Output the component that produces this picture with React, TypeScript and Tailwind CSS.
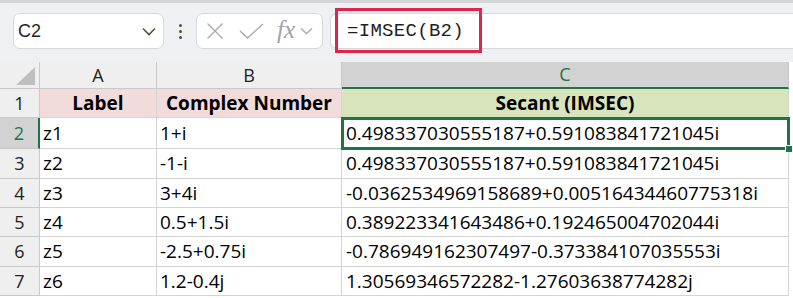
import React from 'react'

type Row = [string, string, string]

const rows: Row[] = [
    ['z1', '1+i', '0.498337030555187+0.591083841721045i'],
    ['z2', '-1-i', '0.498337030555187+0.591083841721045i'],
    ['z3', '3+4i', '-0.0362534969158689+0.00516434460775318i'],
    ['z4', '0.5+1.5i', '0.389223341643486+0.192465004702044i'],
    ['z5', '-2.5+0.75i', '-0.786949162307497-0.373384107035553i'],
    ['z6', '1.2-0.4j', '1.30569346572282-1.27603638774282j'],
]

const Toolbar = () => (
    <div className="h-[62px] bg-[#eef0f3] border-t-[3px] border-[#d3d5d8] flex items-start pt-[10px]">
        {/* name box */}
        <div className="ml-[13px] w-[151px] h-[36px] bg-white border border-[#d6d8db] rounded-[7px] flex items-center justify-between pl-[4px] pr-[7px]">
            <span className="font-['Liberation_Sans',sans-serif] text-[18px] text-[#1f1f1f]">C2</span>
            <svg width="14" height="9" viewBox="0 0 14 9" fill="none">
                <path d="M1 1.5 L7 7.5 L13 1.5" stroke="#5c4b3b" strokeWidth="1.6" />
            </svg>
        </div>
        {/* dots */}
        <div className="w-[32px] h-[36px] flex flex-col items-center justify-center gap-[3px]">
            <span className="w-[3px] h-[3px] rounded-full bg-[#5c4b3b]" />
            <span className="w-[3px] h-[3px] rounded-full bg-[#5c4b3b]" />
            <span className="w-[3px] h-[3px] rounded-full bg-[#5c4b3b]" />
        </div>
        {/* function box */}
        <div className="w-[127px] h-[36px] bg-white border border-[#d6d8db] rounded-[7px] flex items-center pl-[9px]">
            <svg width="18" height="18" viewBox="0 0 18 18" fill="none">
                <path d="M1.5 1.5 L16.5 16.5 M16.5 1.5 L1.5 16.5" stroke="#a9a9a9" strokeWidth="1.4" />
            </svg>
            <svg className="ml-[15px]" width="25" height="16" viewBox="0 0 25 16" fill="none">
                <path d="M1 8 L8.5 15 L24 1" stroke="#a9a9a9" strokeWidth="1.4" />
            </svg>
            <span className="ml-[13px] font-['Liberation_Serif',serif] italic text-[25px] leading-none text-[#a3a3a3] -mt-[3px]">fx</span>
            <svg className="ml-[5px]" width="13" height="8" viewBox="0 0 13 8" fill="none">
                <path d="M1 1.5 L6.5 6.5 L12 1.5" stroke="#a9a9a9" strokeWidth="1.3" />
            </svg>
        </div>
        {/* formula bar */}
        <div className="relative ml-[7px] flex-1 h-[36px] bg-white border-y border-l border-[#d6d8db] rounded-l-[7px] flex items-center pl-[16px]">
            <span className="font-['Liberation_Mono',monospace] text-[19px] text-[#1f1f1f] tracking-[0.3px]">=IMSEC(B2)</span>
            <div className="absolute left-[4px] top-[-6px] w-[147px] h-[45px] border-[3px] border-[#df2450]" />
        </div>
    </div>
)

const Sheet = () => (
    <div className="relative grid grid-cols-[40px_117px_185px_447px] grid-rows-[27px_29px_31px_30px_29px_29px_30px_29px] font-['Open_Sans',sans-serif] text-[19px] text-black">
        {/* header row */}
        <div className="bg-[#efefef] border-r border-b border-[#c9c9c9] relative">
            <svg className="absolute left-[16px] top-[5px]" width="19" height="18" viewBox="0 0 19 18">
                <polygon points="19,0 19,18 0,18" fill="#bfbfbf" />
            </svg>
        </div>
        <div className="bg-[#efefef] border-r border-b border-[#c9c9c9] flex items-center justify-center text-[18px] text-[#222]">A</div>
        <div className="bg-[#efefef] border-r border-b border-[#c9c9c9] flex items-center justify-center text-[18px] text-[#222]">B</div>
        <div className="bg-[#d2d2d2] border-r border-[#c9c9c9] border-b-[2px] border-b-[#217346] flex items-center justify-center text-[18px] text-[#217346]">C</div>

        {/* row 1 */}
        <div className="bg-[#efefef] border-r border-b border-[#c9c9c9] flex items-center justify-center text-[18px] text-[#222]">1</div>
        <div className="bg-[#f2dcdb] border-r border-b border-[#d4d4d4] flex items-center justify-center font-bold">Label</div>
        <div className="bg-[#f2dcdb] border-r border-b border-[#d4d4d4] flex items-center justify-center font-bold">Complex Number</div>
        <div className="bg-[#d8e4bc] border-r border-b border-[#d4d4d4] flex items-center justify-center font-bold">Secant (IMSEC)</div>

        {rows.map((r, i) => (
            <React.Fragment key={r[0]}>
                {i === 0 ? (
                    <div className="bg-[#d2d2d2] border-r-[2px] border-r-[#217346] border-b border-[#c9c9c9] flex items-center justify-center text-[18px] text-[#217346]">{i + 2}</div>
                ) : (
                    <div className="bg-[#efefef] border-r border-b border-[#c9c9c9] flex items-center justify-center text-[18px] text-[#222]">{i + 2}</div>
                )}
                <div className="bg-white border-r border-b border-[#d4d4d4] flex items-center pl-[3px]">{r[0]}</div>
                <div className="bg-white border-r border-b border-[#d4d4d4] flex items-center pl-[3px]">{r[1]}</div>
                <div className="bg-white border-r border-b border-[#d4d4d4] flex items-center pl-[4px]">{r[2]}</div>
            </React.Fragment>
        ))}

        {/* active cell outline + fill handle */}
        <div className="absolute left-[341px] top-[55px] w-[449px] h-[33px] border-[3px] border-[#217346]" />
        <div className="absolute left-[785px] top-[83px] w-[8px] h-[8px] bg-[#217346] border border-white" />
    </div>
)

export default function App() {
    return (
        <div className="w-[793px] h-[298px] bg-white overflow-hidden">
            <Toolbar />
            <Sheet />
        </div>
    )
}
